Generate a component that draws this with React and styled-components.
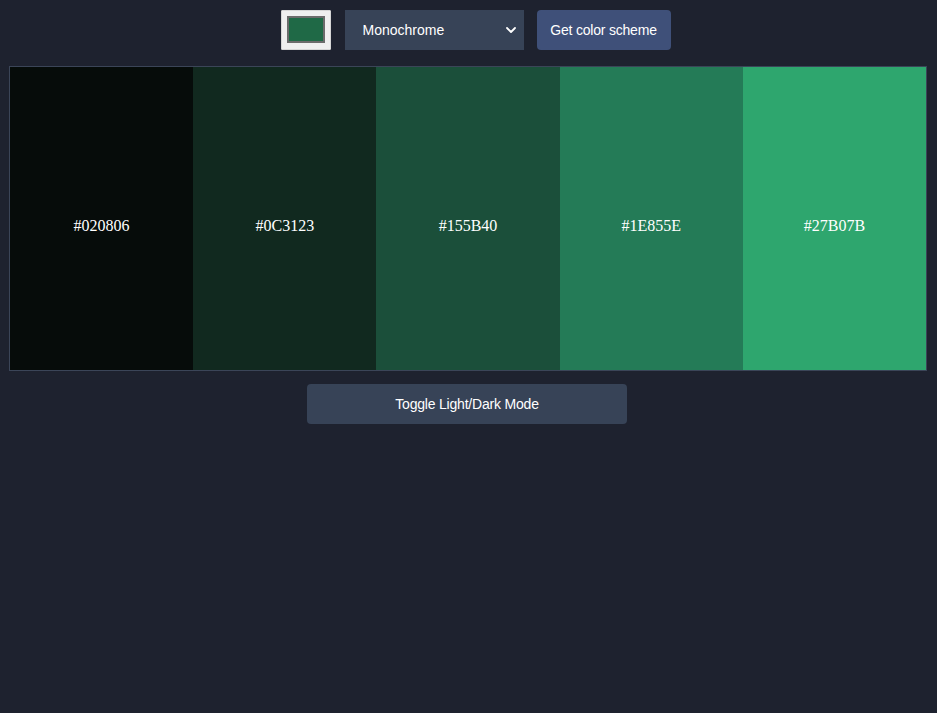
import React from "react";
import styled, {createGlobalStyle} from "styled-components";

// hex is what the api returned, shade is how it shows on screen
const scheme = [
  {hex: "#020806", shade: "#060c0a"},
  {hex: "#0C3123", shade: "#11291f"},
  {hex: "#155B40", shade: "#1b4f3a"},
  {hex: "#1E855E", shade: "#247b57"},
  {hex: "#27B07B", shade: "#2ea66e"},
];

function App() {
  const [seed, setSeed] = React.useState("#1f6946");
  const [mode, setMode] = React.useState("monochrome");

  return (
    <Page>
      <GlobalStyle />
      <Controls>
        <ColorInput type="color" value={seed} onChange={e => setSeed(e.target.value)} />
        <SelectWrap>
          <Select value={mode} onChange={e => setMode(e.target.value)}>
            <option value="monochrome">Monochrome</option>
            <option value="monochrome-dark">Monochrome-dark</option>
            <option value="monochrome-light">Monochrome-light</option>
            <option value="analogic">Analogic</option>
            <option value="complement">Complement</option>
            <option value="triad">Triad</option>
          </Select>
          <Chevron viewBox="0 0 10 6" width="10" height="6">
            <path d="M1 1l4 4 4-4" fill="none" stroke="#fff" strokeWidth="1.8" strokeLinecap="round" strokeLinejoin="round" />
          </Chevron>
        </SelectWrap>
        <SchemeButton>Get color scheme</SchemeButton>
      </Controls>

      <Palette>
        {scheme.map(c => (
          <Swatch key={c.hex} color={c.shade}>
            <HexLabel>{c.hex}</HexLabel>
          </Swatch>
        ))}
      </Palette>

      <Footer>
        <ToggleButton>Toggle Light/Dark Mode</ToggleButton>
      </Footer>
    </Page>
  );
}

const GlobalStyle = createGlobalStyle`
html, body {
  margin: 0;
  background: #1e222f;
}
body {
  font-family: "Liberation Sans", Arial, sans-serif;
}
`;

const Page = styled.div`
min-height: 713px;
box-sizing: border-box;
padding: 10px 10px 0 9px;
background: #1e222f;
`;

const Controls = styled.div`
display: flex;
justify-content: center;
align-items: center;
padding-left: 15px;
`;

const ColorInput = styled.input`
-webkit-appearance: none;
appearance: none;
width: 50px;
height: 40px;
box-sizing: border-box;
padding: 5px 5px 6px;
margin: 0;
background: #efefef;
border: 1px solid #d6d6d6;
border-radius: 1px;
cursor: pointer;

&::-webkit-color-swatch-wrapper {
  padding: 0;
}
&::-webkit-color-swatch {
  border: 2px solid #6b6b6b;
  border-radius: 0;
}
`;

const SelectWrap = styled.div`
position: relative;
margin-left: 14px;
`;

const Select = styled.select`
-webkit-appearance: none;
appearance: none;
width: 179px;
height: 40px;
padding: 0 30px 0 18px;
border: none;
border-radius: 0;
background: #374357;
color: #fff;
font-family: "Liberation Sans", Arial, sans-serif;
font-size: 14px;
outline: none;
`;

const Chevron = styled.svg`
position: absolute;
right: 8px;
top: 17px;
pointer-events: none;
`;

const SchemeButton = styled.button`
margin-left: 13px;
width: 134px;
height: 40px;
border: none;
border-radius: 4px;
background: #3f5079;
color: #fff;
font-family: "Liberation Sans", Arial, sans-serif;
font-size: 14px;
letter-spacing: -0.2px;
cursor: pointer;
`;

const Palette = styled.div`
display: grid;
grid-template-columns: repeat(5, 1fr);
height: 305px;
margin-top: 16px;
box-sizing: border-box;
border: 1px solid #3b4558;
`;

const Swatch = styled.div`
display: flex;
align-items: center;
justify-content: center;
padding-top: 14px;
background: ${p => p.color};
`;

const HexLabel = styled.span`
color: #fff;
font-family: "Liberation Serif", "Times New Roman", serif;
font-size: 16px;
`;

const Footer = styled.div`
display: flex;
justify-content: center;
margin-top: 13px;
padding-right: 2px;
`;

const ToggleButton = styled.button`
width: 320px;
height: 40px;
border: none;
border-radius: 4px;
background: #374357;
color: #fff;
font-family: "Liberation Sans", Arial, sans-serif;
font-size: 14px;
letter-spacing: -0.2px;
cursor: pointer;
`;

export default App;
